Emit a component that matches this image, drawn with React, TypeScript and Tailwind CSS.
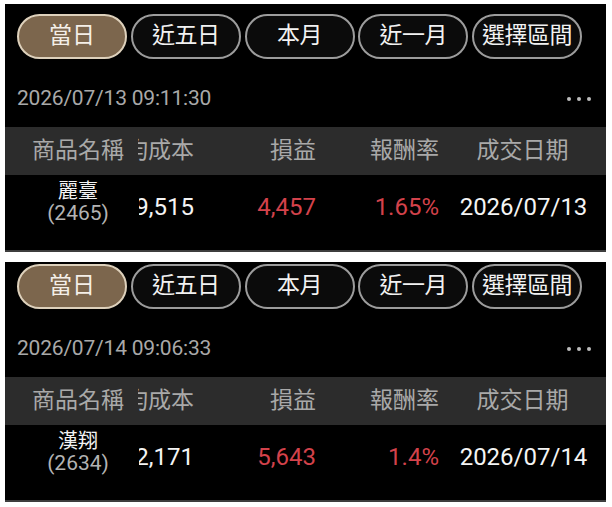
import React from "react";

type Trade = {
  stamp: string;
  name: string;
  code: string;
  cost: string;
  pnl: string;
  rate: string;
  date: string;
};

const trades: { topPad: string; trade: Trade }[] = [
  {
    topPad: "pt-[10px]",
    trade: {
      stamp: "2026/07/13 09:11:30",
      name: "麗臺",
      code: "(2465)",
      cost: "19,515",
      pnl: "4,457",
      rate: "1.65%",
      date: "2026/07/13",
    },
  },
  {
    topPad: "pt-[2px]",
    trade: {
      stamp: "2026/07/14 09:06:33",
      name: "漢翔",
      code: "(2634)",
      cost: "12,171",
      pnl: "5,643",
      rate: "1.4%",
      date: "2026/07/14",
    },
  },
];

const ranges = ["當日", "近五日", "本月", "近一月", "選擇區間"];

const font = { fontFamily: '"Roboto", "Noto Sans CJK TC", sans-serif' };

function Pill({ label, active }: { label: string; active: boolean }) {
  return (
    <div
      className={
        active
          ? "w-[110px] h-[45px] rounded-full border-2 border-[#ddd0bb] bg-[#7c664d] flex items-center justify-center text-[23px] text-[#f4efe8]"
          : "w-[110px] h-[45px] rounded-full border-2 border-[#9c9c9c] bg-[#0b0b0b] flex items-center justify-center text-[23px] text-[#f2f2f2] whitespace-nowrap tracking-[-0.5px]"
      }
    >
      {label}
    </div>
  );
}

function Panel({ topPad, trade }: { topPad: string; trade: Trade }) {
  return (
    <div className={`w-[601px] bg-black flex flex-col ${topPad}`} style={font}>
      {/* range selector */}
      <div className="flex justify-between pl-[12px] pr-[12px] w-[589px]">
        {ranges.map((r, i) => (
          <Pill key={r} label={r} active={i === 0} />
        ))}
      </div>

      {/* timestamp + more menu */}
      <div className="h-[68px] flex items-center justify-between pl-[12px] pr-[15px] pt-[12px]">
        <span className="text-[21px] text-[#a9a9a9] tracking-[-0.2px]">{trade.stamp}</span>
        <div className="flex gap-[6px] items-center">
          <span className="w-[4px] h-[4px] rounded-full bg-[#bdbdbd]" />
          <span className="w-[4px] h-[4px] rounded-full bg-[#bdbdbd]" />
          <span className="w-[4px] h-[4px] rounded-full bg-[#bdbdbd]" />
        </div>
      </div>

      {/* column headers (the table is scrolled sideways, so column two is clipped) */}
      <div className="h-[48px] bg-[#2c2c2c] flex items-center text-[23px] text-[#a9a9a9]">
        <div className="w-[133px] pl-[13px] flex justify-center">商品名稱</div>
        <div className="w-[56px] overflow-hidden flex justify-end whitespace-nowrap">均成本</div>
        <div className="w-[122px] flex justify-end">損益</div>
        <div className="w-[123px] flex justify-end">報酬率</div>
        <div className="w-[167px] flex justify-center">成交日期</div>
      </div>

      {/* data row */}
      <div className="h-[77px] flex items-center border-b-[2px] border-[#3d3d3d] pb-[12px]">
        <div className="w-[134px] pl-[12px] flex flex-col items-center -mt-[9px]">
          <span className="text-[20px] leading-[21px] text-[#f2f2f2]">{trade.name}</span>
          <span className="text-[21px] leading-[22px] text-[#b3b3b3]">{trade.code}</span>
        </div>
        <div className="w-[55px] overflow-hidden flex justify-end whitespace-nowrap text-[24px] text-[#f4f4f4]">
          {trade.cost}
        </div>
        <div className="w-[122px] flex justify-end text-[24px] text-[#d3424b]">{trade.pnl}</div>
        <div className="w-[123px] flex justify-end text-[24px] text-[#d3424b]">{trade.rate}</div>
        <div className="w-[167px] flex justify-center text-[24px] text-[#f4f4f4] pl-[2px]">
          {trade.date}
        </div>
      </div>
    </div>
  );
}

export default function App() {
  return (
    <div className="w-[612px] h-[507px] bg-white pt-[4px] pl-[5px] flex flex-col gap-[10px]">
      {trades.map((t) => (
        <Panel key={t.trade.stamp} topPad={t.topPad} trade={t.trade} />
      ))}
    </div>
  );
}
